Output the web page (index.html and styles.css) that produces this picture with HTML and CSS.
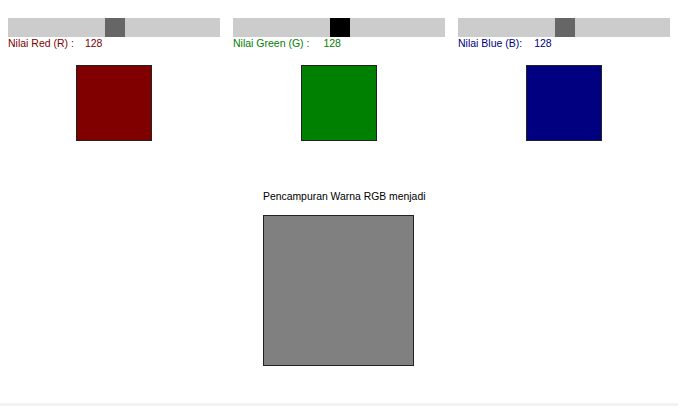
FILE: index.html
```html
<!DOCTYPE html>
<html lang="id">
<head>
<meta charset="utf-8">
<title>Pencampuran Warna RGB</title>
<link rel="stylesheet" href="styles.css">
</head>
<body>
<div class="page">
  <div class="row">
    <div class="col">
      <div class="track"><div class="thumb" style="margin-left:97px"></div></div>
      <div class="label red">Nilai Red (R) :<span class="val v-red">128</span></div>
      <div class="swatch sw-red"></div>
    </div>
    <div class="col">
      <div class="track"><div class="thumb active" style="margin-left:97px"></div></div>
      <div class="label green">Nilai Green (G) :<span class="val v-green">128</span></div>
      <div class="swatch sw-green"></div>
    </div>
    <div class="col">
      <div class="track"><div class="thumb" style="margin-left:97px"></div></div>
      <div class="label blue">Nilai Blue (B):<span class="val v-blue">128</span></div>
      <div class="swatch sw-blue"></div>
    </div>
  </div>
  <div class="mix">
    <div class="mix-inner">
      <div class="mix-label">Pencampuran Warna RGB menjadi</div>
      <div class="mix-box"></div>
    </div>
  </div>
</div>
</body>
</html>
```
FILE: styles.css
```css
html {
  background: #f2f2f2;
}
body {
  margin: 0;
  font-family: "Liberation Sans", Arial, sans-serif;
}
.page {
  box-sizing: border-box;
  height: 403px;
  background: #ffffff;
  padding: 18px 8px 0;
}
.row {
  display: flex;
  gap: 13px;
}
.col {
  width: 212px;
}
.track {
  display: flex;
  height: 19px;
  background: #cccccc;
}
.thumb {
  width: 20px;
  height: 19px;
  background: #666666;
}
.thumb.active {
  background: #000000;
}
.label {
  font-size: 10.5px;
  line-height: 13px;
  height: 13px;
  white-space: nowrap;
}
.red { color: #800000; }
.green { color: #008000; }
.blue { color: #000080; }
.val { display: inline-block; }
.v-red { margin-left: 11px; }
.v-green { margin-left: 14px; }
.v-blue { margin-left: 12px; }
.swatch {
  width: 74px;
  height: 74px;
  margin: 15px auto 0;
  border: 1px solid #222222;
}
.sw-red { background: #800000; }
.sw-green { background: #008000; }
.sw-blue { background: #000080; }
.mix {
  display: flex;
  justify-content: center;
  width: 661px;
  margin-top: 49px;
}
.mix-inner {
  width: 151px;
}
.mix-label {
  font-size: 10.4px;
  line-height: 13px;
  color: #000000;
  white-space: nowrap;
}
.mix-box {
  width: 149px;
  height: 149px;
  margin-top: 12px;
  background: #808080;
  border: 1px solid #222222;
}
```
